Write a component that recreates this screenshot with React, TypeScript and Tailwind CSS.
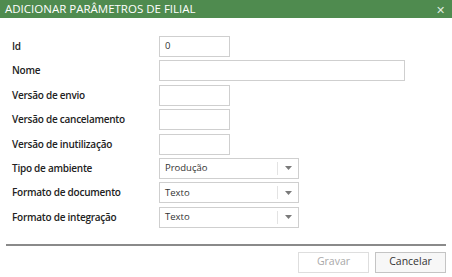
import * as React from 'react';

const font = { fontFamily: '"Open Sans", "Noto Sans", sans-serif' };

function TextBox({ value = '', wide = false }: { value?: string; wide?: boolean }) {
  return (
    <div
      className={`h-[21px] border border-[#cfcfcf] bg-white flex items-center px-[5px] text-[9.5px] text-[#333] ${
        wide ? 'w-[246px]' : 'w-[71px]'
      }`}
    >
      {value}
    </div>
  );
}

function Select({ value }: { value: string }) {
  return (
    <div className="h-[21px] w-[140px] border border-[#cfcfcf] bg-white flex items-center text-[9.5px] text-[#333]">
      <span className="flex-1 pl-[5px]">{value}</span>
      <span className="h-[13px] w-px bg-[#e3e3e3]" />
      <span className="w-[20px] flex justify-center">
        <svg width="7" height="4" viewBox="0 0 7 4">
          <path d="M0 0h7L3.5 4z" fill="#7a7a7a" />
        </svg>
      </span>
    </div>
  );
}

const rows: { label: string; field: React.ReactNode }[] = [
  { label: 'Id', field: <TextBox value="0" /> },
  { label: 'Nome', field: <TextBox wide /> },
  { label: 'Versão de envio', field: <TextBox /> },
  { label: 'Versão de cancelamento', field: <TextBox /> },
  { label: 'Versão de inutilização', field: <TextBox /> },
  { label: 'Tipo de ambiente', field: <Select value="Produção" /> },
  { label: 'Formato de documento', field: <Select value="Texto" /> },
  { label: 'Formato de integração', field: <Select value="Texto" /> },
];

export default function App() {
  return (
    <div className="w-[452px] h-[277px] bg-white overflow-hidden" style={font}>
      <div className="h-[18px] bg-[#4f8b4f] flex items-center justify-between pl-[5px] pr-[7px] text-white">
        <span className="text-[11.5px] leading-none">ADICIONAR PARÂMETROS DE FILIAL</span>
        <span className="text-[11px] leading-none font-light text-[#dfeadf]">✕</span>
      </div>
      <div className="pt-[18px] flex flex-col gap-[3.4px]">
        {rows.map((r) => (
          <div key={r.label} className="flex items-center h-[21px]">
            <span className="w-[159px] pl-[12px] text-[10px] font-semibold tracking-[-0.25px] text-[#222]">
              {r.label}
            </span>
            {r.field}
          </div>
        ))}
      </div>
      <div className="mx-[6px] mt-[16px] h-[2px] bg-[#8a8a8a]" />
      <div className="flex justify-end gap-[6px] pr-[6px] pt-[6px]">
        <button className="h-[21px] w-[71px] border border-[#dedede] bg-white text-[10.5px] text-[#a8a8a8]">
          Gravar
        </button>
        <button className="h-[21px] w-[71px] border border-[#c4c4c4] bg-[#f7f7f7] text-[10.5px] text-[#333]">
          Cancelar
        </button>
      </div>
    </div>
  );
}
